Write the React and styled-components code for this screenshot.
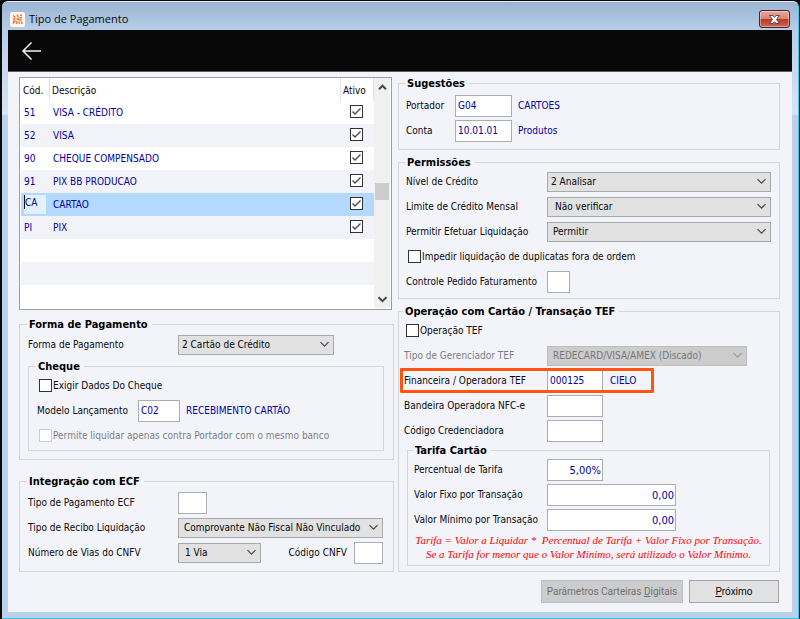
import React from 'react';
import styled, { createGlobalStyle, css } from 'styled-components';

const GlobalStyle = createGlobalStyle`
  * {
    box-sizing: border-box;
  }

  body {
    margin: 0;
    background: #0a0a0c;
    color: #08080c;
    font: 10px/14px 'DejaVu Sans Condensed', 'DejaVu Sans', sans-serif;
  }

  button,
  input,
  select {
    margin: 0;
    font: inherit;
    color: inherit;
  }
`;

const NAVY = '#0000a0';

const StyledWindow = styled.div`
  display: flex;
  flex-direction: column;
  min-height: calc(100vh - 2px);
  margin: 1px 1px 1px 2px;
  padding: 0 6px 6px;
  border-top: 1px solid #e4edf7;
  border-right: 1px solid #35d0ee;
  border-bottom: 1px solid #35c4e0;
  border-radius: 6px 6px 0 0;
  background: linear-gradient(
    #9ab4d2 0,
    #b6cee8 28px,
    #c3d7ed 60px,
    #d6e4f3 112px,
    #b9d1ea 114px
  );
`;

const StyledTitleBar = styled.header`
  display: flex;
  align-items: center;
  height: 28px;
  padding: 6px 2px 0;
`;

const StyledTitle = styled.h1`
  flex: 1;
  margin: 0 0 0 4px;
  font: 11px/16px 'Open Sans', 'Noto Sans', sans-serif;
`;

const StyledClose = styled.button`
  display: grid;
  place-items: center;
  width: 31px;
  height: 18px;
  padding: 0;
  border: 1px solid #4f1f2a;
  border-radius: 3px;
  background: linear-gradient(#e8a79b 0, #d98475 48%, #b93a25 52%, #d0664e 100%);
  box-shadow: inset 0 0 0 1px rgba(255, 255, 255, 0.4);
`;

const StyledToolbar = styled.nav`
  display: flex;
  align-items: center;
  height: 42px;
  padding: 0 13px;
  border-bottom: 1px solid #5a5a5e;
  background: #080808;
`;

const StyledBack = styled.button`
  display: grid;
  padding: 0;
  border: 0;
  background: none;
`;

const StyledMain = styled.main`
  flex: 1;
  display: grid;
  grid-template-columns: minmax(0, 375fr) minmax(0, 382fr);
  align-content: start;
  column-gap: 4px;
  padding: 4px 12px 9px 11px;
  background: #f3f4fa;
`;

const StyledColumn = styled.div`
  display: flex;
  flex-direction: column;
`;

const StyledGroup = styled.fieldset`
  min-width: 0;
  margin: ${props => props.$margin || '0'};
  padding: ${props => props.$padding};
  border: 1px solid #d6d7dc;
`;

const StyledLegend = styled.legend`
  margin-left: -1px;
  padding: 1px 4px 0 2px;
  font-size: 11px;
  font-weight: bold;
  line-height: 13px;
  color: #000;
`;

const StyledRow = styled.div`
  position: relative;
  display: flex;
  align-items: center;
  height: 25px;
  color: ${props => (props.$muted ? '#7c7d83' : 'inherit')};
`;

const StyledHighlightRow = styled(StyledRow)`
  width: 250px;

  /* frame drawn over the row */
  &::after {
    content: '';
    position: absolute;
    inset: 0 0 0 -4px;
    border: 3px solid #ff5510;
    border-radius: 1px;
    pointer-events: none;
  }
`;

const StyledLabel = styled.label`
  flex: none;
  width: ${props => (props.$width ? `${props.$width}px` : 'auto')};
  padding-top: 1px;
  white-space: nowrap;
`;

const StyledPushedLabel = styled(StyledLabel)`
  margin-left: auto;
  padding-right: 7px;
`;

const StyledInput = styled.input`
  flex: none;
  width: ${props => props.$width}px;
  height: 22px;
  padding: 0 2px;
  border: 1px solid #abadb3;
  border-radius: 0;
  background: #fff;
  color: ${NAVY};
  outline: 0;

  ${props =>
    props.$numeric &&
    css`
      padding: 2px 1px 0;
      font-size: 11px;
      text-align: right;
    `}
`;

const StyledValue = styled.output`
  margin-left: ${props => props.$gap || 6}px;
  color: ${NAVY};
  white-space: nowrap;
`;

const StyledSelectBox = styled.span`
  display: grid;
  align-items: center;
  flex: ${props => (props.$width ? 'none' : '1')};
  width: ${props => (props.$width ? `${props.$width}px` : 'auto')};

  > * {
    grid-area: 1 / 1;
  }

  > svg {
    justify-self: end;
    margin-right: 4px;
    pointer-events: none;
  }
`;

const StyledSelect = styled.select`
  width: 100%;
  height: 20px;
  padding: 0 16px 0 ${props => props.$indent || 3}px;
  border: 1px solid #a9a9ab;
  border-radius: 0;
  background: #e1e1e1;
  appearance: none;

  &:disabled {
    border-color: #bdbdbd;
    background: #cccccc;
    color: #76767a;
    opacity: 1;
  }
`;

const StyledCheckBox = styled.span`
  display: inline-grid;
  place-items: center;
  vertical-align: middle;
  margin: ${props => props.$margin || '0'};

  > * {
    grid-area: 1 / 1;
  }

  > svg {
    pointer-events: none;
  }
`;

const StyledCheckInput = styled.input`
  width: 13px;
  height: 13px;
  border: 1px solid #333336;
  background: #fff;
  appearance: none;

  &:disabled {
    border-color: #cccccc;
  }
`;

const StyledList = styled.div`
  display: flex;
  height: 233px;
  margin: 1px 2px 7px 0;
  padding: 0 1px 1px;
  border: 1px solid #9b9da3;
  background: #fff;
`;

const StyledTable = styled.table`
  flex: 1;
  align-self: flex-start;
  width: 100%;
  table-layout: fixed;
  border-collapse: separate;
  border-spacing: 0;
`;

const StyledHeadCell = styled.th`
  width: ${props => (props.$width ? `${props.$width}px` : 'auto')};
  height: 23px;
  padding: 2px 2px 0;
  border-right: 1px solid #e3e3e5;
  font-weight: normal;
  text-align: left;
  white-space: nowrap;
`;

const StyledTableRow = styled.tr`
  height: 23px;
  background: ${props => (props.$selected ? '#b3d9ff' : '#fff')};
  color: ${NAVY};

  &:nth-child(even) {
    background: #f2f3f9;
  }
`;

const StyledCell = styled.td`
  padding: 0 3px;
  vertical-align: middle;
  white-space: nowrap;
`;

const StyledCheckCell = styled(StyledCell)`
  padding: 0 3px 3px 0;
  text-align: center;
`;

const StyledCodeInput = styled.input`
  display: block;
  width: 22px;
  height: 19px;
  padding: 0 0 5px;
  border: 0;
  border-left: 1px solid #101018;
  border-image: linear-gradient(#101018 70%, #e3f1ff 70%) 1;
  background: #e3f1ff;
  color: ${NAVY};
  outline: 0;
`;

const StyledScrollBar = styled.div`
  flex: none;
  display: flex;
  flex-direction: column;
  width: 16px;
  background: #f0f0f0;
`;

const StyledScrollButton = styled.button`
  display: grid;
  place-items: center;
  width: 16px;
  height: 18px;
  padding: 0;
  border: 0;
  background: none;
`;

const StyledThumb = styled.div`
  height: 17px;
  margin: 87px 1px auto;
  background: #cdcdcd;
`;

const StyledNote = styled.p`
  margin: 1px 0 0;
  font: italic 11px/14px 'Liberation Serif', serif;
  color: #f00;
  text-align: center;
  white-space: pre;
`;

const StyledActions = styled.footer`
  display: flex;
  justify-content: flex-end;
  gap: 6px;
  margin: 8px 1px 0 0;
`;

const StyledButton = styled.button`
  width: ${props => props.$width}px;
  height: 23px;
  padding: 0;
  border: 1px solid #a5a5a8;
  background: #e1e1e1;
  font-family: Roboto, 'Liberation Sans', sans-serif;
  white-space: nowrap;

  &:disabled {
    border-color: #bfbfbf;
    background: #cccccc;
    color: #707074;
  }
`;

const Chevron = ({ up, bold, color = '#48484c' }) => (
  <svg width="11" height="7" viewBox="0 0 11 7" fill="none" aria-hidden="true">
    <path
      d={up ? 'M2 5.2 5.5 1.7 9 5.2' : 'M1.5 1.2 5.5 5.2 9.5 1.2'}
      stroke={color}
      strokeWidth={bold ? 2 : 1.2}
    />
  </svg>
);

const CheckBox = ({ margin, ...props }) => (
  <StyledCheckBox $margin={margin}>
    <StyledCheckInput type="checkbox" {...props} />
    {props.defaultChecked && (
      <svg width="13" height="13" viewBox="0 0 13 13" fill="none" aria-hidden="true">
        <path d="M2.5 6.5 5 9 10.5 3.5" stroke="#4a4a4e" strokeWidth="1.4" />
      </svg>
    )}
  </StyledCheckBox>
);

const CheckField = ({ id, label, disabled }) => (
  <StyledRow $muted={disabled}>
    <CheckBox id={id} disabled={disabled} margin="0 1px 0 2px" />
    <StyledLabel htmlFor={id}>{label}</StyledLabel>
  </StyledRow>
);

const Select = ({ width, indent, value, ...props }) => (
  <StyledSelectBox $width={width}>
    <StyledSelect $indent={indent} {...props}>
      <option>{value}</option>
    </StyledSelect>
    <Chevron color={props.disabled ? '#9a9a9c' : undefined} />
  </StyledSelectBox>
);

const SelectField = ({ id, label, labelWidth, disabled, ...props }) => (
  <StyledRow $muted={disabled}>
    <StyledLabel htmlFor={id} $width={labelWidth}>{label}</StyledLabel>
    <Select id={id} disabled={disabled} {...props} />
  </StyledRow>
);

const TextField = ({ id, label, labelWidth, width, value, numeric, note, noteGap, highlight }) => {
  const Row = highlight ? StyledHighlightRow : StyledRow;

  return (
    <Row>
      <StyledLabel htmlFor={id} $width={labelWidth}>{label}</StyledLabel>
      <StyledInput id={id} $width={width} $numeric={numeric} defaultValue={value} />
      {note && <StyledValue htmlFor={id} $gap={noteGap}>{note}</StyledValue>}
    </Row>
  );
};

const Group = ({ title, margin, padding, children }) => (
  <StyledGroup $margin={margin} $padding={padding}>
    <StyledLegend>{title}</StyledLegend>
    {children}
  </StyledGroup>
);

const AppLogo = () => (
  <svg width="15" height="15" viewBox="0 0 15 15" fill="none" aria-hidden="true">
    <rect width="15" height="15" rx="2" fill="#fff7f2" />
    <g stroke="#f4722b" strokeWidth="1.4">
      <path d="M3 3.5 5.5 5.5M7 2.5 8.5 5.5M10 3 12 3.5M3 7 5.5 6.8M6.5 6.5 11.5 8.5" />
      <path d="M9.5 6 12 5.5M3 11.5 5.5 8.5M6.5 12 7 9M9 9.5 9.5 12M11.5 9.5 12 12M3 9.2H4.5" />
    </g>
  </svg>
);

const BackArrow = () => (
  <svg width="21" height="20" viewBox="0 0 21 20" fill="none" aria-hidden="true">
    <path d="M20 10H2M10.5 1.5 2 10 10.5 18.5" stroke="#f4f4f4" strokeWidth="1.5" />
  </svg>
);

const CloseMark = () => (
  <svg width="13" height="11" viewBox="0 0 13 11" aria-hidden="true">
    <path
      d="M1.5 1.5H5L6.5 3.3 8 1.5H11.5L8.5 5.5 11.5 9.5H8L6.5 7.7 5 9.5H1.5L4.5 5.5Z"
      fill="#fff"
      stroke="#5c4a52"
    />
  </svg>
);

const paymentTypes = [
  { code: '51', description: 'VISA - CRÉDITO' },
  { code: '52', description: 'VISA' },
  { code: '90', description: 'CHEQUE COMPENSADO' },
  { code: '91', description: 'PIX BB PRODUCAO' },
  { code: 'CA', description: 'CARTAO', selected: true },
  { code: 'PI', description: 'PIX' },
  {},
  {},
  {},
];

const PaymentTypeList = () => (
  <StyledList>
    <StyledTable>
      <thead>
        <tr>
          <StyledHeadCell $width={29}>Cód.</StyledHeadCell>
          <StyledHeadCell>Descrição</StyledHeadCell>
          <StyledHeadCell $width={33}>Ativo</StyledHeadCell>
        </tr>
      </thead>
      <tbody>
        {paymentTypes.map(({ code, description, selected }, index) => (
          <StyledTableRow key={index} $selected={selected}>
            <StyledCell>
              {selected ? <StyledCodeInput aria-label="Cód." defaultValue={code} /> : code}
            </StyledCell>
            <StyledCell>{description}</StyledCell>
            <StyledCheckCell>
              {code && <CheckBox aria-label={`Ativo ${code}`} defaultChecked />}
            </StyledCheckCell>
          </StyledTableRow>
        ))}
      </tbody>
    </StyledTable>
    <StyledScrollBar>
      <StyledScrollButton type="button" aria-label="Rolar para cima">
        <Chevron up bold />
      </StyledScrollButton>
      <StyledThumb />
      <StyledScrollButton type="button" aria-label="Rolar para baixo">
        <Chevron bold />
      </StyledScrollButton>
    </StyledScrollBar>
  </StyledList>
);

const PaymentMethod = () => (
  <Group title="Forma de Pagamento" padding="1px 9px 8px 8px">
    <SelectField id="forma" label="Forma de Pagamento" labelWidth={150} width={156} value="2 Cartão de Crédito" />
    <Group title="Cheque" margin="2px 0 0" padding="0 8px 2px">
      <CheckField id="exigir" label="Exigir Dados Do Cheque" />
      <TextField
        id="modelo"
        label="Modelo Lançamento"
        labelWidth={101}
        width={42}
        value="C02"
        note="RECEBIMENTO CARTÃO"
      />
      <CheckField id="permite" label="Permite liquidar apenas contra Portador com o mesmo banco" disabled />
    </Group>
  </Group>
);

const EcfIntegration = () => (
  <Group title="Integração com ECF" margin="14px 0 0" padding="2px 10px 6px 8px">
    <TextField id="tipoEcf" label="Tipo de Pagamento ECF" labelWidth={150} width={29} />
    <SelectField
      id="recibo"
      label="Tipo de Recibo Liquidação"
      labelWidth={150}
      indent={5}
      value="Comprovante Não Fiscal Não Vinculado"
    />
    <StyledRow>
      <StyledLabel htmlFor="vias" $width={150}>Número de Vias do CNFV</StyledLabel>
      <Select id="vias" width={83} indent={6} value="1 Via" />
      <StyledPushedLabel htmlFor="cnfv">Código CNFV</StyledPushedLabel>
      <StyledInput id="cnfv" $width={29} />
    </StyledRow>
  </Group>
);

const Suggestions = () => (
  <Group title="Sugestões" padding="3px 8px 6px 7px">
    <TextField id="portador" label="Portador" labelWidth={49} width={57} value="G04" note="CARTOES" />
    <TextField id="conta" label="Conta" labelWidth={49} width={57} value="10.01.01" note="Produtos" />
  </Group>
);

const Permissions = () => (
  <Group title="Permissões" margin="5px 0 0" padding="0 8px 4px 7px">
    <SelectField id="nivel" label="Nível de Crédito" labelWidth={141} value="2 Analisar" />
    <SelectField id="limite" label="Limite de Crédito Mensal" labelWidth={141} indent={7} value="Não verificar" />
    <SelectField id="efetuar" label="Permitir Efetuar Liquidação" labelWidth={141} indent={5} value="Permitir" />
    <CheckField id="impedir" label="Impedir liquidação de duplicatas fora de ordem" />
    <TextField id="controle" label="Controle Pedido Faturamento" labelWidth={141} width={23} />
  </Group>
);

const CardOperation = () => (
  <Group title="Operação com Cartão / Transação TEF" margin="5px 0 0" padding="0 9px 5px 5px">
    <CheckField id="operacao" label="Operação TEF" />
    <SelectField
      id="gerenciador"
      label="Tipo de Gerenciador TEF"
      labelWidth={143}
      width={200}
      indent={5}
      value="REDECARD/VISA/AMEX (Discado)"
      disabled
    />
    <TextField
      id="financeira"
      label="Financeira / Operadora TEF"
      labelWidth={143}
      width={56}
      value="000125"
      note="CIELO"
      noteGap={7}
      highlight
    />
    <TextField id="bandeira" label="Bandeira Operadora NFC-e" labelWidth={143} width={56} />
    <TextField id="credenciadora" label="Código Credenciadora" labelWidth={143} width={56} />
    <Group title="Tarifa Cartão" margin="0 0 0 3px" padding="0 6px 4px">
      <TextField id="percentual" label="Percentual de Tarifa" labelWidth={133} width={56} value="5,00%" numeric />
      <TextField id="fixo" label="Valor Fixo por Transação" labelWidth={133} width={129} value="0,00" numeric />
      <TextField id="minimo" label="Valor Mínimo por Transação" labelWidth={133} width={129} value="0,00" numeric />
      <StyledNote>
        {'Tarifa = Valor a Liquidar *  Percentual de Tarifa + Valor Fixo por Transação.\n'}
        {'Se a Tarifa for menor que o Valor Minimo, será utilizado o Valor Minimo.'}
      </StyledNote>
    </Group>
  </Group>
);

const App = () => (
  <>
    <GlobalStyle />
    <StyledWindow>
      <StyledTitleBar>
        <AppLogo />
        <StyledTitle>Tipo de Pagamento</StyledTitle>
        <StyledClose type="button" aria-label="Fechar">
          <CloseMark />
        </StyledClose>
      </StyledTitleBar>
      <StyledToolbar>
        <StyledBack type="button" aria-label="Voltar">
          <BackArrow />
        </StyledBack>
      </StyledToolbar>
      <StyledMain>
        <StyledColumn>
          <PaymentTypeList />
          <PaymentMethod />
          <EcfIntegration />
        </StyledColumn>
        <StyledColumn>
          <Suggestions />
          <Permissions />
          <CardOperation />
          <StyledActions>
            <StyledButton type="button" $width={142} disabled>
              Parâmetros Carteiras <u>D</u>igitais
            </StyledButton>
            <StyledButton type="button" $width={90}>
              <u>P</u>róximo
            </StyledButton>
          </StyledActions>
        </StyledColumn>
      </StyledMain>
    </StyledWindow>
  </>
);

export default App;
